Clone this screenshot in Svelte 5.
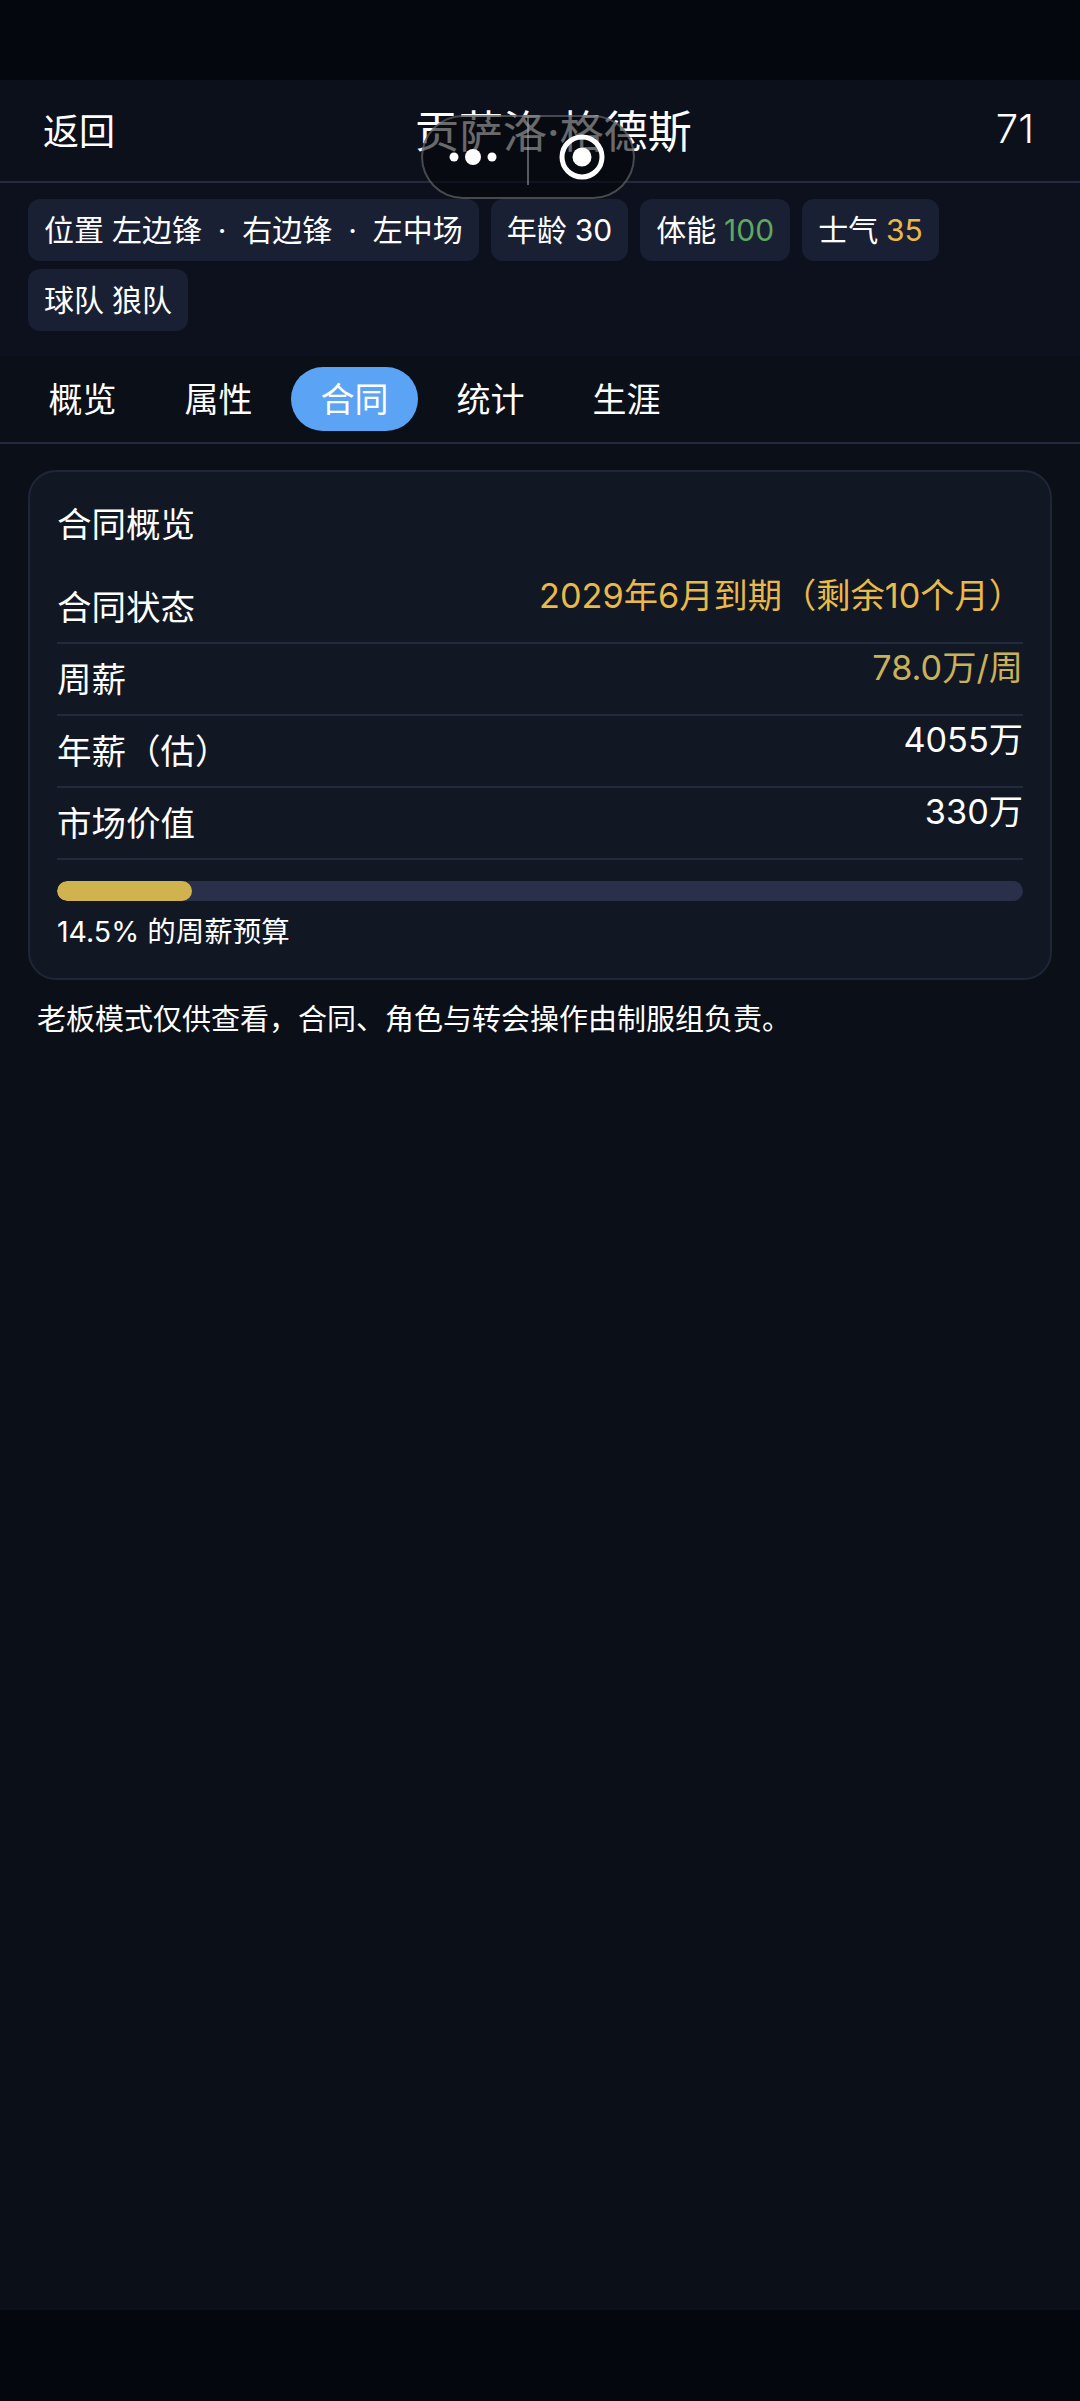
<script>
  const chips = [
    { label: '位置', value: '左边锋  ·  右边锋  ·  左中场' },
    { label: '年龄', value: '30' },
    { label: '体能', value: '100', tone: 'green' },
    { label: '士气', value: '35', tone: 'amber' },
    { label: '球队', value: '狼队' }
  ];
  const tabs = ['概览', '属性', '合同', '统计', '生涯'];
  const rows = [
    { label: '合同状态', value: '2029年6月到期（剩余10个月）', tone: 'amber' },
    { label: '周薪', value: '78.0万/周', tone: 'gold' },
    { label: '年薪（估）', value: '4055万' },
    { label: '市场价值', value: '330万' }
  ];
  const budget = 14.5;
</script>

<div class="page">
  <div class="inset"></div>

  <header class="topbar">
    <span class="side">返回</span>
    <span class="title">贡萨洛·格德斯</span>
    <span class="side score">71</span>
  </header>

  <section class="chips">
    {#each chips as chip}
      <span class="chip">{chip.label} <span class={chip.tone}>{chip.value}</span></span>
    {/each}
  </section>

  <nav class="tabs">
    {#each tabs as tab}
      <span class="tab" class:active={tab === '合同'}>{tab}</span>
    {/each}
  </nav>

  <main class="content">
    <section class="card">
      <h2>合同概览</h2>
      {#each rows as row}
        <div class="row">
          <span class="label">{row.label}</span>
          <span class="value {row.tone ?? ''}">{row.value}</span>
        </div>
      {/each}
      <div class="track"><div class="fill" style="width: {budget * 0.965}%"></div></div>
      <p class="caption">{budget}% 的周薪预算</p>
    </section>
    <p class="note">老板模式仅供查看，合同、角色与转会操作由制服组负责。</p>
  </main>

  <div class="inset bottom"></div>

  <div class="capsule">
    <svg class="dots" width="50" height="20" viewBox="0 0 50 20">
      <circle cx="6" cy="10" r="4.5" fill="#fff" />
      <circle cx="25" cy="10" r="8" fill="#fff" />
      <circle cx="44" cy="10" r="4.5" fill="#fff" />
    </svg>
    <span class="divider"></span>
    <svg class="target" width="46" height="46" viewBox="0 0 46 46">
      <circle cx="23" cy="23" r="20" fill="none" stroke="#fff" stroke-width="5" />
      <circle cx="23" cy="23" r="9.5" fill="#fff" />
    </svg>
  </div>
</div>

<style>
  :global(body) {
    margin: 0;
    background: #0b0f18;
  }

  .page {
    position: relative;
    display: flex;
    flex-direction: column;
    height: 2401px;
    overflow: hidden;
    color: #fff;
    font-family: Inter, "Noto Sans CJK SC", sans-serif;
    font-weight: 400;
  }

  .inset {
    height: 80px;
    background: #05070f;
  }

  .bottom {
    height: 91px;
  }

  .topbar {
    display: flex;
    align-items: center;
    justify-content: space-between;
    height: 103px;
    padding: 0 46px 4px 43px;
    box-sizing: border-box;
    border-bottom: 2px solid #232a42;
    background: #0c101b;
  }

  .side {
    font-size: 36px;
  }

  .score {
    font-size: 40px;
    font-weight: 300;
  }

  .title {
    margin-right: 4px;
    font-size: 44px;
  }

  .chips {
    display: flex;
    flex-wrap: wrap;
    gap: 8px 12px;
    padding: 16px 28px 25px;
    background: #0c111d;
  }

  .chip {
    height: 62px;
    line-height: 62px;
    padding: 0 16px;
    border-radius: 12px;
    background: #1a2033;
    font-size: 30px;
    white-space: pre;
    word-spacing: -0.5px;
  }

  .green {
    color: #5fa85f;
  }

  .amber {
    color: #e9b949;
  }

  .gold {
    color: #c9b15a;
  }

  .tabs {
    display: flex;
    gap: 9px;
    padding: 11px 19px;
    border-bottom: 2px solid #232a3d;
  }

  .tab {
    width: 127px;
    height: 64px;
    line-height: 66px;
    border-radius: 32px;
    text-align: center;
    font-size: 34px;
  }

  .active {
    background: #5ba4f5;
  }

  .content {
    flex: 1;
    padding: 26px 28px 0;
  }

  .card {
    padding: 29px 27px 0;
    height: 510px;
    box-sizing: border-box;
    border: 2px solid #1f2638;
    border-radius: 28px;
    background: #111723;
  }

  h2 {
    margin: 0 0 23px;
    font-size: 34.5px;
    font-weight: 400;
    line-height: 48px;
  }

  .row {
    display: flex;
    justify-content: space-between;
    height: 72px;
    box-sizing: border-box;
    border-bottom: 2px solid #232a3d;
  }

  .label {
    padding-top: 12px;
    font-size: 34.5px;
    line-height: 48px;
  }

  .value {
    margin-top: 0;
    font-size: 34.25px;
    line-height: 48px;
  }

  .track {
    height: 20px;
    margin-top: 21px;
    border-radius: 10px;
    background: #2a2f4a;
    overflow: hidden;
  }

  .fill {
    height: 100%;
    border-radius: 10px;
    background: #d0b24f;
  }

  .caption {
    margin: 11px 0 0;
    font-size: 28.5px;
    line-height: 40px;
  }

  .note {
    margin: 20px 9px 0;
    font-size: 29px;
    line-height: 40px;
  }

  .capsule {
    position: absolute;
    left: 421px;
    top: 115px;
    display: flex;
    align-items: center;
    width: 214px;
    height: 84px;
    box-sizing: border-box;
    border: 2px solid rgba(150, 150, 155, 0.45);
    border-radius: 42px;
    background: rgba(5, 6, 10, 0.6);
  }

  .dots {
    position: absolute;
    left: 25px;
    top: 30px;
  }

  .divider {
    position: absolute;
    left: 104px;
    top: 0;
    width: 2px;
    height: 68px;
    background: rgba(170, 170, 175, 0.5);
  }

  .target {
    position: absolute;
    left: 136px;
    top: 17px;
  }
</style>
